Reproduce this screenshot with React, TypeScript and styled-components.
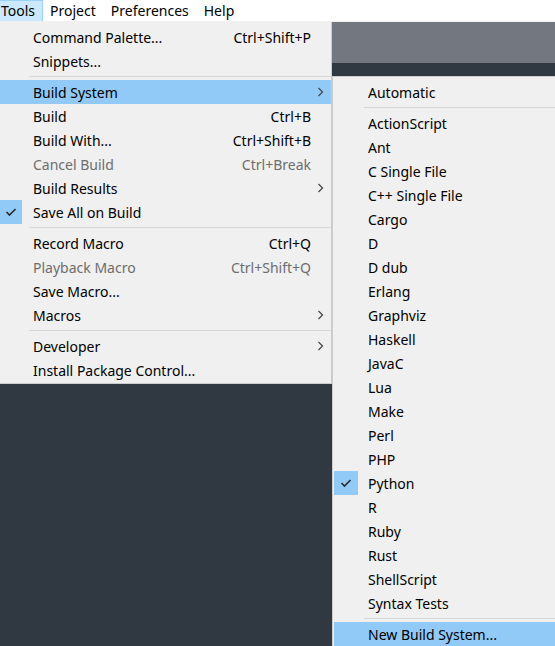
import React from "react";
import styled, { createGlobalStyle } from "styled-components";

const GlobalStyle = createGlobalStyle`
  html, body {
    margin: 0;
    padding: 0;
    width: 555px;
    height: 646px;
    overflow: hidden;
    background: #303841;
  }
  * {
    box-sizing: border-box;
  }
`;

type Entry =
  | { kind: "sep" }
  | {
      kind: "item";
      label: string;
      shortcut?: string;
      disabled?: boolean;
      checked?: boolean;
      submenu?: boolean;
      active?: boolean;
    };

const toolsMenu: Entry[] = [
  { kind: "item", label: "Command Palette...", shortcut: "Ctrl+Shift+P" },
  { kind: "item", label: "Snippets..." },
  { kind: "sep" },
  { kind: "item", label: "Build System", submenu: true, active: true },
  { kind: "item", label: "Build", shortcut: "Ctrl+B" },
  { kind: "item", label: "Build With...", shortcut: "Ctrl+Shift+B" },
  { kind: "item", label: "Cancel Build", shortcut: "Ctrl+Break", disabled: true },
  { kind: "item", label: "Build Results", submenu: true },
  { kind: "item", label: "Save All on Build", checked: true },
  { kind: "sep" },
  { kind: "item", label: "Record Macro", shortcut: "Ctrl+Q" },
  { kind: "item", label: "Playback Macro", shortcut: "Ctrl+Shift+Q", disabled: true },
  { kind: "item", label: "Save Macro..." },
  { kind: "item", label: "Macros", submenu: true },
  { kind: "sep" },
  { kind: "item", label: "Developer", submenu: true },
  { kind: "item", label: "Install Package Control..." },
];

const buildSystems = [
  "ActionScript",
  "Ant",
  "C Single File",
  "C++ Single File",
  "Cargo",
  "D",
  "D dub",
  "Erlang",
  "Graphviz",
  "Haskell",
  "JavaC",
  "Lua",
  "Make",
  "Perl",
  "PHP",
  "Python",
  "R",
  "Ruby",
  "Rust",
  "ShellScript",
  "Syntax Tests",
];

const buildMenu: Entry[] = [
  { kind: "item", label: "Automatic" },
  { kind: "sep" },
  ...buildSystems.map(
    (name): Entry => ({ kind: "item", label: name, checked: name === "Python" })
  ),
  { kind: "sep" },
  { kind: "item", label: "New Build System...", active: true },
];

const topMenus = ["Tools", "Project", "Preferences", "Help"];

function CheckIcon() {
  return (
    <svg width="12" height="10" viewBox="0 0 12 10">
      <polyline
        points="1.5,5 4.5,8 10.5,2"
        fill="none"
        stroke="#2b2b2b"
        strokeWidth="1.6"
      />
    </svg>
  );
}

function ChevronIcon() {
  return (
    <svg width="7" height="10" viewBox="0 0 7 10">
      <polyline
        points="1.5,1 5.5,5 1.5,9"
        fill="none"
        stroke="#4a4a4a"
        strokeWidth="1.3"
      />
    </svg>
  );
}

function MenuList({
  entries,
  checkWidth,
  textGap,
  withShortcuts,
}: {
  entries: Entry[];
  checkWidth: number;
  textGap: number;
  withShortcuts?: boolean;
}) {
  return (
    <>
      {entries.map((e, i) =>
        e.kind === "sep" ? (
          <Separator key={i} inset={checkWidth + textGap - 4}>
            <SeparatorLine />
          </Separator>
        ) : (
          <Item key={i} active={e.active}>
            <CheckCell size={checkWidth} gap={textGap} checked={e.checked}>
              {e.checked && <CheckIcon />}
            </CheckCell>
            <Label disabled={e.disabled}>{e.label}</Label>
            {withShortcuts && (
              <Shortcut disabled={e.disabled}>{e.shortcut}</Shortcut>
            )}
            {withShortcuts && <Arrow>{e.submenu && <ChevronIcon />}</Arrow>}
          </Item>
        )
      )}
    </>
  );
}

export default function App() {
  return (
    <Window>
      <GlobalStyle />
      <MenuBar>
        {topMenus.map((m) => (
          <TopItem key={m} open={m === "Tools"}>
            {m}
          </TopItem>
        ))}
      </MenuBar>
      <Workspace>
        <TabStrip />
        <Editor />
        <ToolsMenu>
          <MenuList
            entries={toolsMenu}
            checkWidth={22}
            textGap={11}
            withShortcuts
          />
        </ToolsMenu>
        <BuildMenu>
          <MenuList entries={buildMenu} checkWidth={24} textGap={10} />
        </BuildMenu>
      </Workspace>
    </Window>
  );
}

const Window = styled.div`
  width: 555px;
  height: 646px;
  display: flex;
  flex-direction: column;
  font-family: "Segoe UI", "Noto Sans", "Open Sans", sans-serif;
  font-size: 14px;
  color: #000;
`;

const MenuBar = styled.div`
  height: 22px;
  display: flex;
  align-items: stretch;
  margin-left: -6px;
  background: #ffffff;
  border-bottom: 1px solid #f0f0f0;
`;

const TopItem = styled.div<{ open?: boolean }>`
  display: flex;
  align-items: center;
  padding: 0 7px 1px 6px;
  background: ${(p) => (p.open ? "#cce8ff" : "transparent")};
  border: 1px solid ${(p) => (p.open ? "#99d1ff" : "transparent")};
  border-bottom: none;
  line-height: 1;
`;

const Workspace = styled.div`
  position: relative;
  flex: 1;
  display: flex;
  flex-direction: column;
`;

const TabStrip = styled.div`
  height: 41px;
  background: #737880;
`;

const Editor = styled.div`
  flex: 1;
  background: #303841;
`;

const MenuPanel = styled.div`
  position: absolute;
  display: flex;
  flex-direction: column;
  background: #f0f0f0;
  border: 1px solid #cccccc;
`;

const ToolsMenu = styled(MenuPanel)`
  left: 0;
  top: 0;
  width: 332px;
  padding: 3px 0 1px 0;
  border-left: none;
  border-top: none;
`;

const BuildMenu = styled(MenuPanel)`
  left: 332px;
  top: 54px;
  width: 240px;
  padding: 3px 0 0 1px;
  border-right: none;
  border-bottom: none;
  box-shadow: 1px 1px 2px rgba(0, 0, 0, 0.15);
`;

const Item = styled.div<{ active?: boolean }>`
  height: 24px;
  display: flex;
  align-items: center;
  background: ${(p) => (p.active ? "#91c9f7" : "transparent")};
  white-space: nowrap;
`;

const CheckCell = styled.div<{ size: number; gap: number; checked?: boolean }>`
  width: ${(p) => p.size}px;
  height: 24px;
  margin-right: ${(p) => p.gap}px;
  flex-shrink: 0;
  display: flex;
  align-items: center;
  justify-content: center;
  background: ${(p) => (p.checked ? "#91c9f7" : "transparent")};
`;

const Label = styled.span<{ disabled?: boolean }>`
  flex: 1;
  color: ${(p) => (p.disabled ? "#6d6d6d" : "#000")};
`;

const Shortcut = styled.span<{ disabled?: boolean }>`
  color: ${(p) => (p.disabled ? "#6d6d6d" : "#000")};
  text-align: right;
`;

const Arrow = styled.span`
  width: 20px;
  display: flex;
  justify-content: flex-end;
  padding-right: 7px;
`;

const Separator = styled.div<{ inset: number }>`
  height: 7px;
  display: flex;
  align-items: center;
  padding-left: ${(p) => p.inset}px;
`;

const SeparatorLine = styled.div`
  flex: 1;
  height: 1px;
  background: #d7d7d7;
`;
